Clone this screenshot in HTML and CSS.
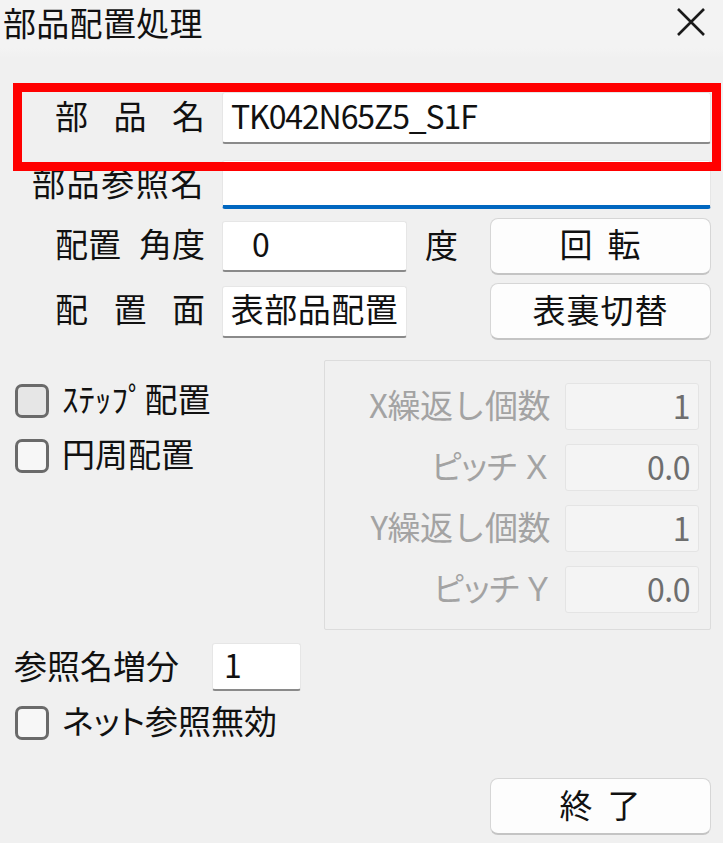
FILE: index.html
```html
<!DOCTYPE html>
<html lang="ja">
<head>
<meta charset="utf-8">
<title>部品配置処理</title>
<link rel="stylesheet" href="styles.css">
</head>
<body>
<div class="window">
  <div class="titlebar">
    <span class="title">部品配置処理</span>
    <svg class="close" width="32" height="32" viewBox="0 0 32 32"><path d="M3 3 L29 29 M29 3 L3 29" stroke="#1a1a1a" stroke-width="2.6" fill="none"/></svg>
  </div>

  <div class="content">
    <div class="row r1">
      <div class="label spread"><span>部</span><span>品</span><span>名</span></div>
      <div class="field wide">TK042N65Z5_S1F</div>
    </div>
    <div class="row r2">
      <div class="label">部品参照名</div>
      <div class="field wide focus"></div>
    </div>
    <div class="row r3">
      <div class="label spread"><span>配置</span><span>角度</span></div>
      <div class="field short angle">0</div>
      <span class="unit">度</span>
      <div class="btn">回<span class="gap"></span>転</div>
    </div>
    <div class="row r4">
      <div class="label spread"><span>配</span><span>置</span><span>面</span></div>
      <div class="field short center">表部品配置</div>
      <div class="btn">表裏切替</div>
    </div>

    <div class="middle">
      <div class="checks">
        <div class="check"><span class="box hover"></span><span class="ctext">ｽﾃｯﾌﾟ配置</span></div>
        <div class="check"><span class="box"></span><span class="ctext">円周配置</span></div>
      </div>
      <div class="group">
        <div class="grow"><span class="glabel">X繰返し個数</span><div class="dfield">1</div></div>
        <div class="grow"><span class="glabel kana">ピッチ Ｘ</span><div class="dfield">0.0</div></div>
        <div class="grow"><span class="glabel">Y繰返し個数</span><div class="dfield">1</div></div>
        <div class="grow"><span class="glabel kana">ピッチ Ｙ</span><div class="dfield">0.0</div></div>
      </div>
    </div>

    <div class="incr">
      <span class="ilabel">参照名増分</span>
      <div class="field small">1</div>
    </div>
    <div class="check net"><span class="box"></span><span class="ctext kana">ネット参照無効</span></div>

    <div class="footer">
      <div class="btn">終<span class="gap"></span>了</div>
    </div>
  </div>

  <div class="highlight"></div>
</div>
</body>
</html>
```

FILE: styles.css
```css
html, body {
  margin: 0;
  padding: 0;
  background: #f0f0f0;
}

body {
  font-family: "Noto Sans CJK JP", "Noto Sans", sans-serif;
  font-size: 33px;
  color: #111;
  line-height: 1;
}

.window {
  position: relative;
  width: 723px;
  height: 843px;
  overflow: hidden;
}

.titlebar {
  height: 58px;
  background: linear-gradient(#f3f3f3 0, #f3f3f3 48px, #f0f0f0 58px);
  display: flex;
  align-items: flex-start;
  justify-content: space-between;
  padding: 6px 16px 0 3px;
  box-sizing: border-box;
}

.title {
  letter-spacing: 0.3px;
}

.content {
  padding: 34px 12px 0 0;
}

.row {
  display: flex;
  align-items: center;
}

.r1 { height: 52px; }
.r2 { height: 49px; margin-top: 16px; }
.r3 { height: 58px; margin-top: 8px; }
.r4 { height: 57px; margin-top: 8px; }

.label {
  width: 205px;
  flex: none;
  text-align: right;
  margin-right: 17px;
  letter-spacing: 1.5px;
  padding-bottom: 6px;
  box-sizing: border-box;
}

.r2 .label {
  letter-spacing: 1.6px;
  margin-right: 15px;
  padding-right: 2px;
  width: 207px;
  padding-bottom: 4px;
}

.label.spread {
  display: flex;
  justify-content: space-between;
  padding-left: 55px;
  letter-spacing: 0;
}

.field {
  background: #fff;
  border: 1px solid #e6e6e6;
  border-bottom: 2px solid #8a8a8a;
  border-radius: 3px;
  box-sizing: border-box;
  display: flex;
  align-items: center;
  padding: 0 0 6px 8px;
  white-space: nowrap;
  font-size: 32px;
}

.wide {
  width: 490px;
  height: 52px;
}

.r1 .field { letter-spacing: -1.1px; }

.focus {
  height: 49px;
  border-bottom: 4px solid #0067c0;
}

.short {
  width: 185px;
  height: 51px;
}

.r4 .short { height: 52px; }

.angle {
  padding-left: 29px;
}

.center {
  justify-content: center;
  padding-left: 0;
  font-size: 33px;
  letter-spacing: 0.5px;
}

.unit {
  margin-left: 18px;
  padding-bottom: 4px;
}

.btn {
  margin-left: auto;
  width: 221px;
  height: 57px;
  box-sizing: border-box;
  background: #fdfdfd;
  border: 1px solid #d6d6d6;
  border-bottom: 2px solid #c4c4c4;
  border-radius: 8px;
  display: flex;
  align-items: center;
  justify-content: center;
  padding-bottom: 4px;
  letter-spacing: 1px;
}

.gap {
  display: inline-block;
  width: 14px;
}

.middle {
  display: flex;
  margin-top: 20px;
}

.checks {
  width: 324px;
  flex: none;
  padding: 23px 0 0 15px;
  box-sizing: border-box;
}

.check {
  display: flex;
  align-items: center;
  height: 35px;
}

.check + .check {
  margin-top: 20px;
}

.box {
  width: 34px;
  height: 34px;
  box-sizing: border-box;
  border: 3px solid #6a6a6a;
  border-radius: 7px;
  background: #f7f7f7;
  flex: none;
}

.box.hover {
  background: #e6e6e6;
}

.ctext {
  margin-left: 13px;
  padding-bottom: 4px;
}

.kana {
  font-feature-settings: "palt";
}

.group {
  width: 387px;
  height: 270px;
  box-sizing: border-box;
  border: 1px solid #dcdcdc;
  border-radius: 2px;
  padding: 22px 11px 0 0;
  display: flex;
  flex-direction: column;
  gap: 14px;
}

.grow {
  display: flex;
  align-items: center;
  justify-content: flex-end;
  height: 47px;
}

.glabel {
  color: #a3a3a3;
  margin-right: 15px;
  padding-bottom: 4px;
  letter-spacing: -0.5px;
}

.dfield {
  width: 134px;
  height: 47px;
  box-sizing: border-box;
  background: #f4f4f4;
  border: 1px solid #e4e4e4;
  border-radius: 3px;
  color: #6e6e6e;
  display: flex;
  align-items: center;
  justify-content: flex-end;
  padding: 0 8px 4px 0;
  font-size: 32px;
  letter-spacing: -0.5px;
}

.incr {
  display: flex;
  align-items: center;
  margin-top: 13px;
  padding-left: 14px;
  height: 48px;
}

.ilabel {
  padding-bottom: 4px;
}

.small {
  margin-left: 33px;
  width: 89px;
  height: 48px;
  padding-left: 11px;
}

.check.net {
  margin-top: 14px;
  padding-left: 15px;
}

.footer {
  display: flex;
  justify-content: flex-end;
  margin-top: 38px;
}

.footer .btn {
  margin-left: 0;
}

.highlight {
  position: absolute;
  left: 13px;
  top: 83px;
  width: 708px;
  height: 88px;
  border: 9px solid #ff0000;
  box-sizing: border-box;
  pointer-events: none;
}
```
